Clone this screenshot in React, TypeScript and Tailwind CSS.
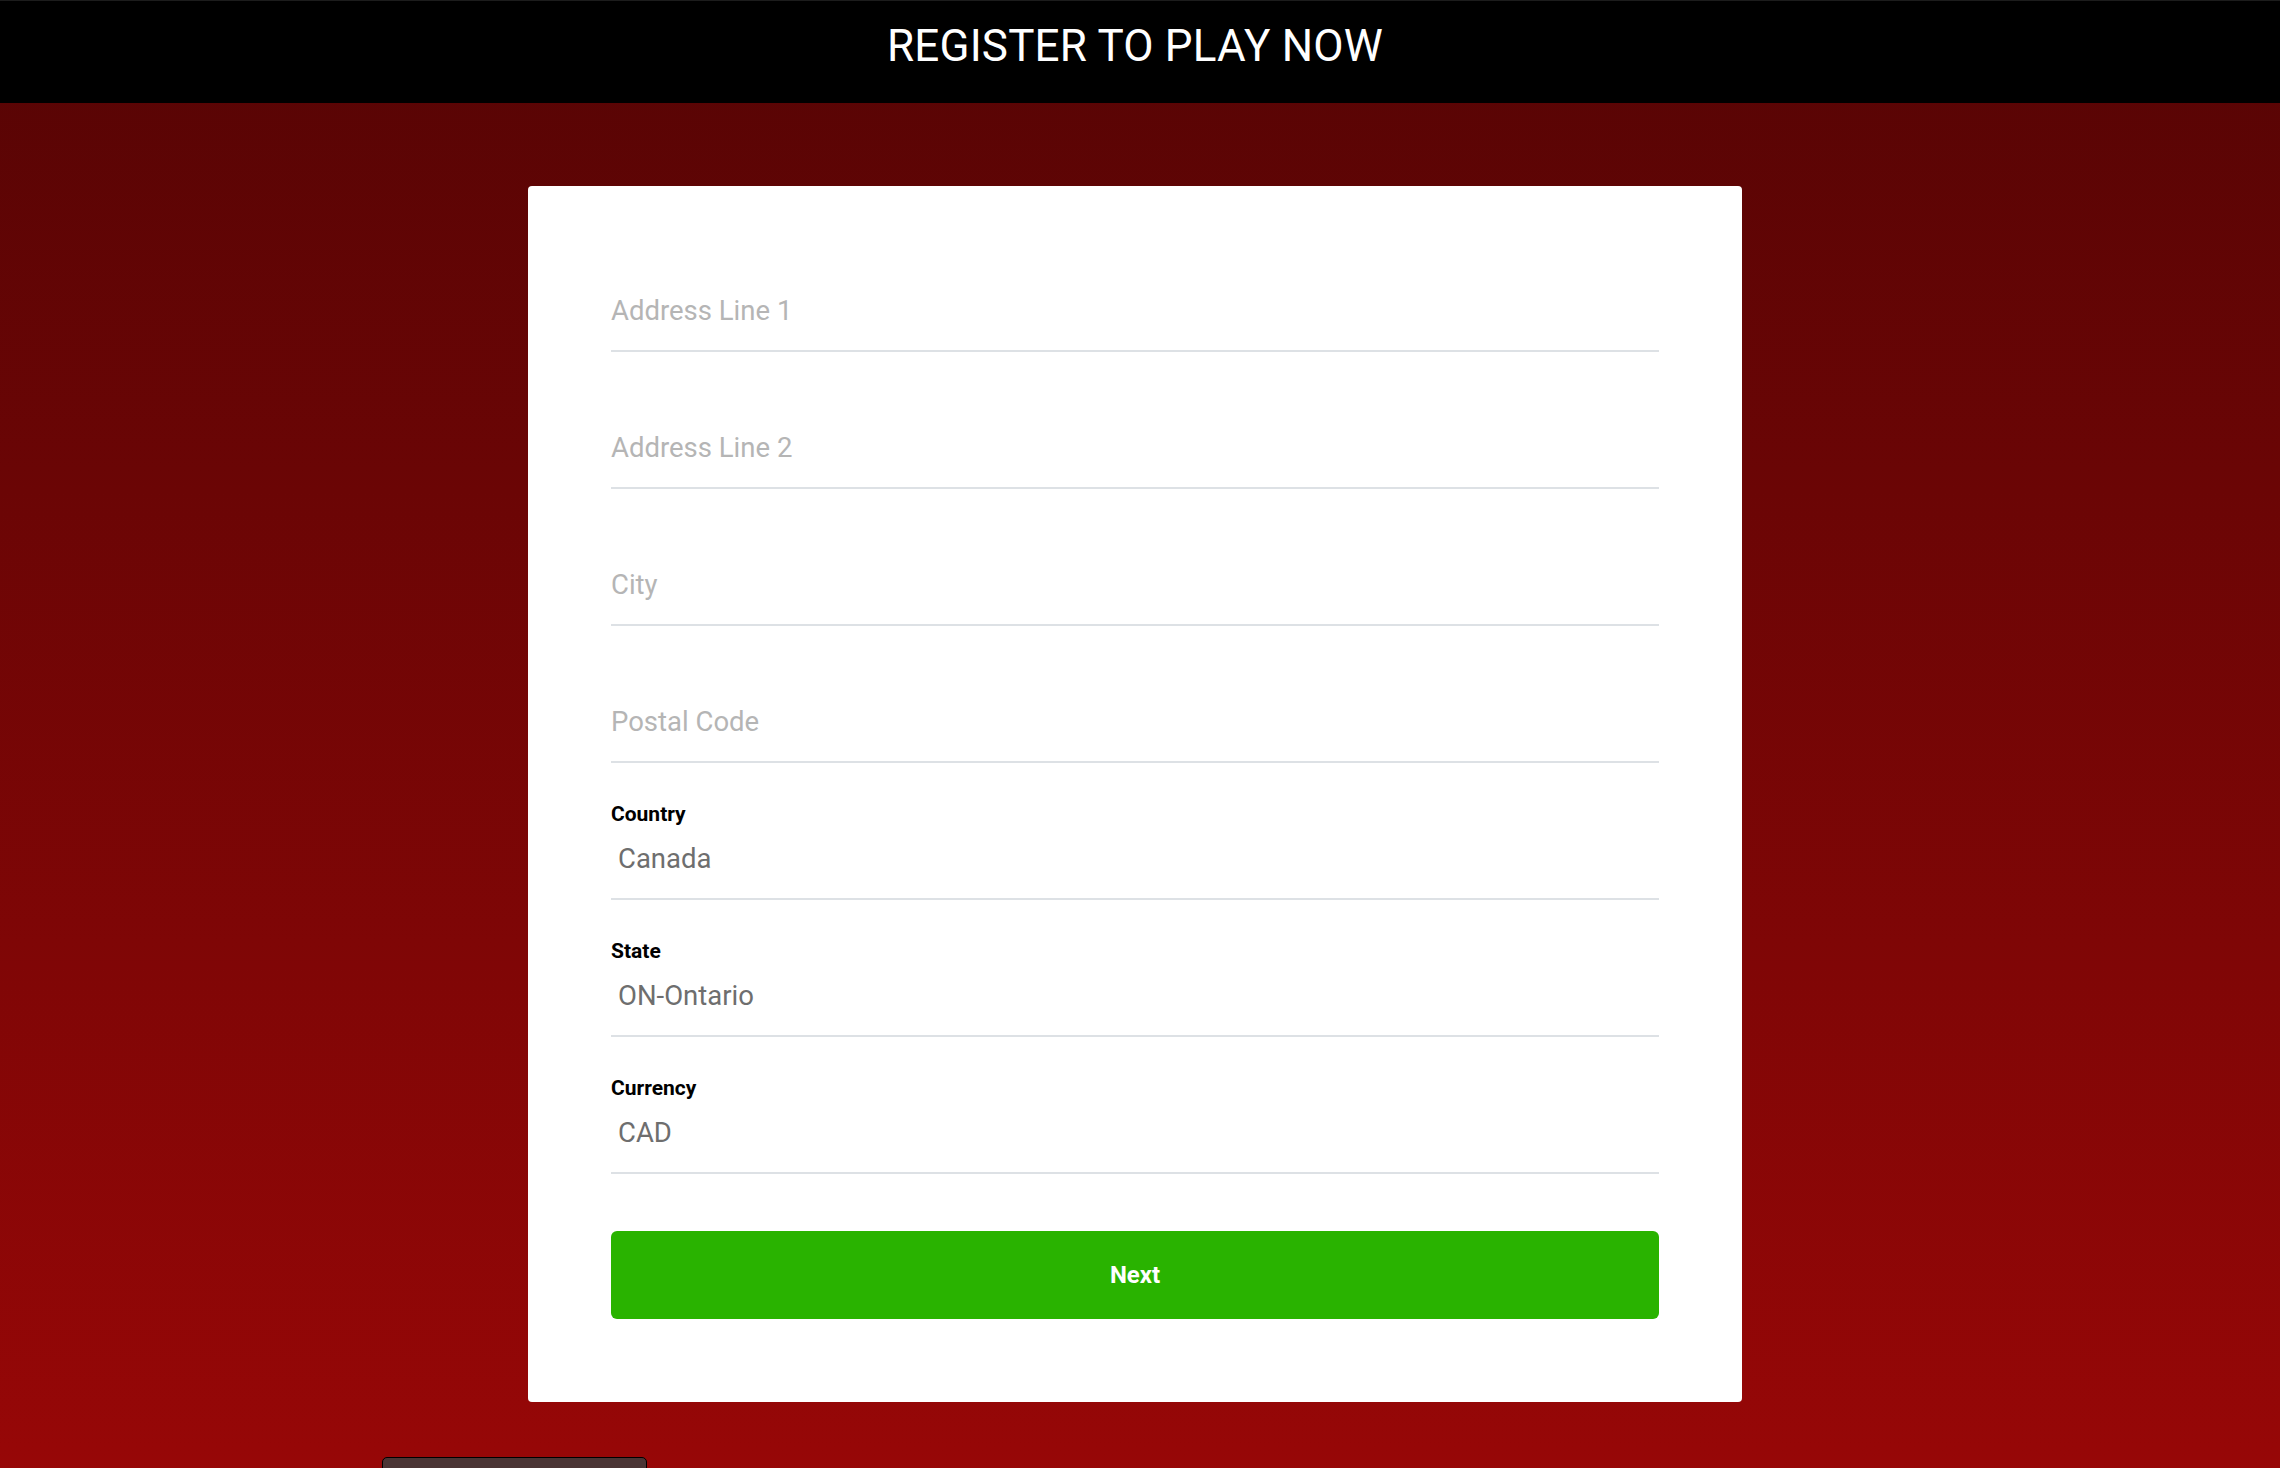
import React from "react";

const FIELDS: { label?: string; placeholder?: string; value?: string }[] = [
  { placeholder: "Address Line 1" },
  { placeholder: "Address Line 2" },
  { placeholder: "City" },
  { placeholder: "Postal Code" },
  { label: "Country", value: "Canada" },
  { label: "State", value: "ON-Ontario" },
  { label: "Currency", value: "CAD" },
];

export default function App() {
  return (
    <div
      className="h-[1468px] overflow-hidden bg-gradient-to-b from-[#560404] to-[#970707]"
      style={{ fontFamily: "Roboto, 'Liberation Sans', sans-serif" }}
    >
      {/* Header */}
      <header className="h-[103px] bg-black border-t border-[#1c1c1c] flex items-center justify-center pr-[10px]">
        <h1 className="text-white text-[44px] leading-none font-normal tracking-[0.2px] -mt-[12px]">
          REGISTER TO PLAY NOW
        </h1>
      </header>

      {/* Form card */}
      <div className="pr-[10px] pt-[83px]">
        <div className="mx-auto w-[1214px] bg-white rounded-[4px] px-[83px] pt-[29px] pb-[83px]">
          {FIELDS.map((f, i) => (
            <Field key={i} {...f} />
          ))}
          <button className="mt-[57px] w-full h-[88px] rounded-[6px] bg-[#29b300] text-white text-[24px] font-bold">
            Next
          </button>
        </div>
      </div>

      {/* Floating tab peeking at the bottom */}
      <div className="mt-[55px] ml-[382px] w-[265px] h-[20px] rounded-t-[5px] border border-black bg-[#4a3535]" />
    </div>
  );
}

function Field({ label, placeholder, value }: { label?: string; placeholder?: string; value?: string }) {
  return (
    <div className="mt-[39px]">
      <div className="h-[24px] leading-[24px] text-[21px] font-bold text-black">{label ?? ""}</div>
      <div className="h-[74px] border-b-2 border-[#dde1e5] flex items-center pb-[6px]">
        {value ? (
          <span className="pl-[7px] text-[27.5px] text-[#6e6e6e]">{value}</span>
        ) : (
          <span className="text-[27.5px] text-[#b5b5b5]">{placeholder}</span>
        )}
      </div>
    </div>
  );
}
